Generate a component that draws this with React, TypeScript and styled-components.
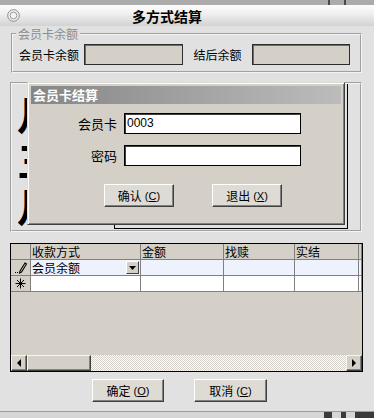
import styled, { createGlobalStyle } from "styled-components";

const GlobalStyle = createGlobalStyle`
  body {
    margin: 0;
    font-family: "Noto Sans CJK SC", "Liberation Sans", sans-serif;
    font-size: 12px;
    color: #000;
  }
`;

const Window = styled.div`
  width: 374px;
  height: 418px;
  background: #e1e1e1;
  display: flex;
  flex-direction: column;
  overflow: hidden;
`;

const TopStrip = styled.div`
  height: 5px;
  background: #ababab;
  display: flex;
  justify-content: flex-end;
  padding-right: 28px;
  gap: 14px;
  span {
    width: 2px;
    background: #4a4a4a;
  }
`;

const TitleBar = styled.div`
  height: 21px;
  background: linear-gradient(#fdfdfd, #f0f0f0 40%, #d2d2d2);
  display: flex;
  align-items: center;
  padding-left: 7px;
`;

const Title = styled.div`
  margin-left: 112px;
  font-size: 14px;
  font-weight: bold;
  line-height: 16px;
`;

const Body = styled.div`
  flex: 1;
  display: flex;
  flex-direction: column;
  padding: 0 11px 0 10px;
`;

const Group = styled.fieldset`
  margin: 1px 1px 0 1px;
  padding: 3px 10px 6px 6px;
  border: 2px groove #f4f4f4;
  display: flex;
  align-items: center;
  min-width: 0;
`;

const Legend = styled.legend`
  margin-left: -3px;
  padding: 0 2px;
  font-size: 12px;
  line-height: 14px;
  color: #8c8c8c;
`;

const FieldLabel = styled.span<{ $gap: number }>`
  margin-left: ${(p) => p.$gap}px;
  margin-right: 5px;
  line-height: 14px;
  white-space: nowrap;
`;

const ReadOnlyBox = styled.div<{ $w: number }>`
  width: ${(p) => p.$w}px;
  height: 21px;
  box-sizing: border-box;
  background: #d4d0c8;
  border: 1px solid #2c2c2c;
  box-shadow: inset 1px 1px #6c6c6c;
`;

const Panel = styled.div`
  margin: 9px 1px 0 0;
  height: 150px;
  box-sizing: border-box;
  border: 2px groove #f4f4f4;
  position: relative;
  display: flex;
  padding: 0 12px 1px 5px;
`;

/* only the left edge of these large characters shows beside the dialog */
const BigGlyphs = styled.div`
  width: 10px;
  overflow: hidden;
  display: flex;
  flex-direction: column;
  font-size: 40px;
  font-weight: bold;
  line-height: 46px;
  padding-top: 6px;
`;

const HiddenBox = styled.div`
  flex: 1;
  margin-left: 87px;
  border: 1px solid #000;
  border-top: none;
`;

const Dialog = styled.div`
  position: absolute;
  left: 15px;
  top: -2px;
  width: 318px;
  height: 143px;
  box-sizing: border-box;
  background: #d4d0c8;
  border: 1px solid;
  border-color: #dcdad4 #404040 #404040 #dcdad4;
  box-shadow: inset 1px 1px #fff, inset -1px -1px #808080;
  padding: 2px;
  display: flex;
  flex-direction: column;
`;

const DialogTitle = styled.div`
  height: 18px;
  margin: 1px;
  background: linear-gradient(90deg, #868686, #bcbcbc);
  color: #fff;
  font-size: 13px;
  font-weight: bold;
  line-height: 18px;
  padding-left: 2px;
`;

const Form = styled.div`
  display: flex;
  flex-direction: column;
  gap: 11px;
  padding: 8px 0 0 37px;
`;

const FormRow = styled.div`
  display: flex;
  align-items: center;
`;

const FormLabel = styled.span`
  width: 50px;
  margin-right: 7px;
  text-align: right;
  font-size: 13px;
  line-height: 16px;
`;

const TextInput = styled.div`
  width: 177px;
  height: 21px;
  box-sizing: border-box;
  background: #fff;
  border: 1px solid #000;
  box-shadow: inset 1px 1px #404040;
  font-family: "Liberation Sans", sans-serif;
  font-size: 12px;
  line-height: 18px;
  padding-left: 2px;
`;

const DialogButtons = styled.div`
  display: flex;
  gap: 38px;
  padding: 18px 0 0 74px;
`;

const Button = styled.div<{ $w: number }>`
  width: ${(p) => p.$w}px;
  height: 23px;
  box-sizing: border-box;
  background: #dedbd5;
  border: 1px solid;
  border-color: #fff #404040 #404040 #fff;
  box-shadow: inset -1px -1px #808080;
  display: flex;
  align-items: center;
  justify-content: center;
  font-size: 12px;
  line-height: 14px;
`;

const Mnemonic = styled.span`
  margin-left: 3px;
  font-family: "Liberation Sans", sans-serif;
  font-size: 11px;
  u {
    text-underline-offset: 1px;
  }
`;

const Grid = styled.div`
  margin-top: 11px;
  height: 129px;
  box-sizing: border-box;
  border: 1px solid #000;
  background: #d4d0c8;
  display: flex;
  flex-direction: column;
`;

const GridRow = styled.div<{ $bg: string }>`
  display: grid;
  grid-template-columns: 20px 110px 83px 71px 64px 1fr;
  height: 16px;
  background: ${(p) => p.$bg};
`;

const Cell = styled.div`
  box-sizing: border-box;
  border-right: 1px solid #808080;
  border-bottom: 1px solid #808080;
  padding-left: 1px;
  line-height: 15px;
  font-size: 12px;
  display: flex;
  align-items: center;
  justify-content: space-between;
  overflow: hidden;
  white-space: nowrap;
`;

const Selector = styled(Cell)`
  background: #d4d0c8;
  justify-content: center;
  padding: 0;
`;

const DropButton = styled.div`
  width: 13px;
  height: 13px;
  box-sizing: border-box;
  background: #d4d0c8;
  border: 1px solid;
  border-color: #fff #404040 #404040 #fff;
  display: flex;
  align-items: center;
  justify-content: center;
  margin-right: 1px;
`;

const Empty = styled.div`
  flex: 1;
`;

const ScrollBar = styled.div`
  height: 16px;
  display: flex;
  background: repeating-conic-gradient(#fff 0 25%, #d4d0c8 0 50%) 0 0 / 2px 2px;
`;

const ScrollPart = styled.div<{ $w: number }>`
  width: ${(p) => p.$w}px;
  box-sizing: border-box;
  background: #d4d0c8;
  border: 1px solid;
  border-color: #f4f4f4 #404040 #404040 #f4f4f4;
  box-shadow: inset -1px -1px #808080;
  display: flex;
  align-items: center;
  justify-content: center;
`;

const Track = styled.div`
  flex: 1;
`;

const Footer = styled.div`
  display: flex;
  gap: 30px;
  padding: 7px 0 0 82px;
`;

const BottomStrip = styled.div`
  height: 6px;
  border-top: 1px solid #9c9c9c;
  background: #d6d6d6;
  display: flex;
  justify-content: flex-end;
  gap: 9px;
  span {
    background: #3a3a3a;
  }
`;

const Tri = ({ dir }: { dir: "left" | "right" | "down" }) => {
  const d =
    dir === "left" ? "M5 0 L5 8 L1 4 Z" : dir === "right" ? "M1 0 L1 8 L5 4 Z" : "M0 1 L7 1 L3.5 5 Z";
  return (
    <svg width={dir === "down" ? 7 : 6} height={dir === "down" ? 6 : 8} viewBox={dir === "down" ? "0 0 7 6" : "0 0 6 8"}>
      <path d={d} fill="#000" />
    </svg>
  );
};

const RingIcon = () => (
  <svg width="13" height="13" viewBox="0 0 13 13">
    <circle cx="6.5" cy="6.5" r="5.8" fill="#f2f2f2" stroke="#8a8a8a" />
    <circle cx="6.5" cy="6.5" r="3.4" fill="none" stroke="#9a9a9a" />
  </svg>
);

const PencilIcon = () => (
  <svg width="14" height="13" viewBox="0 0 14 13">
    <path d="M6 10 L11 2 L12.5 3 L7.5 11 L5.6 12 Z" fill="none" stroke="#000" strokeWidth="1.1" />
    <rect x="1" y="11" width="1" height="1" fill="#000" />
    <rect x="3" y="11" width="1" height="1" fill="#000" />
  </svg>
);

const StarIcon = () => (
  <svg width="11" height="11" viewBox="0 0 11 11">
    <g stroke="#000" strokeWidth="1">
      <line x1="5.5" y1="0.5" x2="5.5" y2="10.5" />
      <line x1="0.5" y1="5.5" x2="10.5" y2="5.5" />
      <line x1="2" y1="2" x2="9" y2="9" />
      <line x1="9" y1="2" x2="2" y2="9" />
    </g>
  </svg>
);

const Label = ({ text, keyChar }: { text: string; keyChar: string }) => (
  <>
    {text}
    <Mnemonic>
      (<u>{keyChar}</u>)
    </Mnemonic>
  </>
);

const columns = ["收款方式", "金额", "找赎", "实结", ""];

export default function App() {
  return (
    <>
      <GlobalStyle />
      <Window>
        <TopStrip>
          <span />
          <span />
        </TopStrip>
        <TitleBar>
          <RingIcon />
          <Title>多方式结算</Title>
        </TitleBar>
        <Body>
          <Group>
            <Legend>会员卡余额</Legend>
            <FieldLabel $gap={0}>会员卡余额</FieldLabel>
            <ReadOnlyBox $w={100} />
            <FieldLabel $gap={11}>结后余额</FieldLabel>
            <ReadOnlyBox $w={100} style={{ marginLeft: 5 }} />
          </Group>

          <Panel>
            <BigGlyphs>
              <span>月</span>
              <span>三</span>
              <span>月</span>
            </BigGlyphs>
            <HiddenBox />
            <Dialog>
              <DialogTitle>会员卡结算</DialogTitle>
              <Form>
                <FormRow>
                  <FormLabel>会员卡</FormLabel>
                  <TextInput>0003</TextInput>
                </FormRow>
                <FormRow>
                  <FormLabel>密码</FormLabel>
                  <TextInput />
                </FormRow>
              </Form>
              <DialogButtons>
                <Button $w={70}>
                  <Label text="确认" keyChar="C" />
                </Button>
                <Button $w={70}>
                  <Label text="退出" keyChar="X" />
                </Button>
              </DialogButtons>
            </Dialog>
          </Panel>

          <Grid>
            <GridRow $bg="#d4d0c8">
              <Selector />
              {columns.map((c, i) => (
                <Cell key={i}>{c}</Cell>
              ))}
            </GridRow>
            <GridRow $bg="#eef2fc">
              <Selector>
                <PencilIcon />
              </Selector>
              <Cell>
                会员余额
                <DropButton>
                  <Tri dir="down" />
                </DropButton>
              </Cell>
              <Cell />
              <Cell />
              <Cell />
              <Cell />
            </GridRow>
            <GridRow $bg="#fff">
              <Selector>
                <StarIcon />
              </Selector>
              <Cell />
              <Cell />
              <Cell />
              <Cell />
              <Cell />
            </GridRow>
            <Empty />
            <ScrollBar>
              <ScrollPart $w={16}>
                <Tri dir="left" />
              </ScrollPart>
              <ScrollPart $w={64} />
              <Track />
              <ScrollPart $w={16}>
                <Tri dir="right" />
              </ScrollPart>
            </ScrollBar>
          </Grid>

          <Footer>
            <Button $w={72}>
              <Label text="确定" keyChar="O" />
            </Button>
            <Button $w={73}>
              <Label text="取消" keyChar="C" />
            </Button>
          </Footer>
        </Body>
        <BottomStrip>
          <span style={{ width: 8 }} />
          <span style={{ width: 5 }} />
          <span style={{ width: 19 }} />
        </BottomStrip>
      </Window>
    </>
  );
}
